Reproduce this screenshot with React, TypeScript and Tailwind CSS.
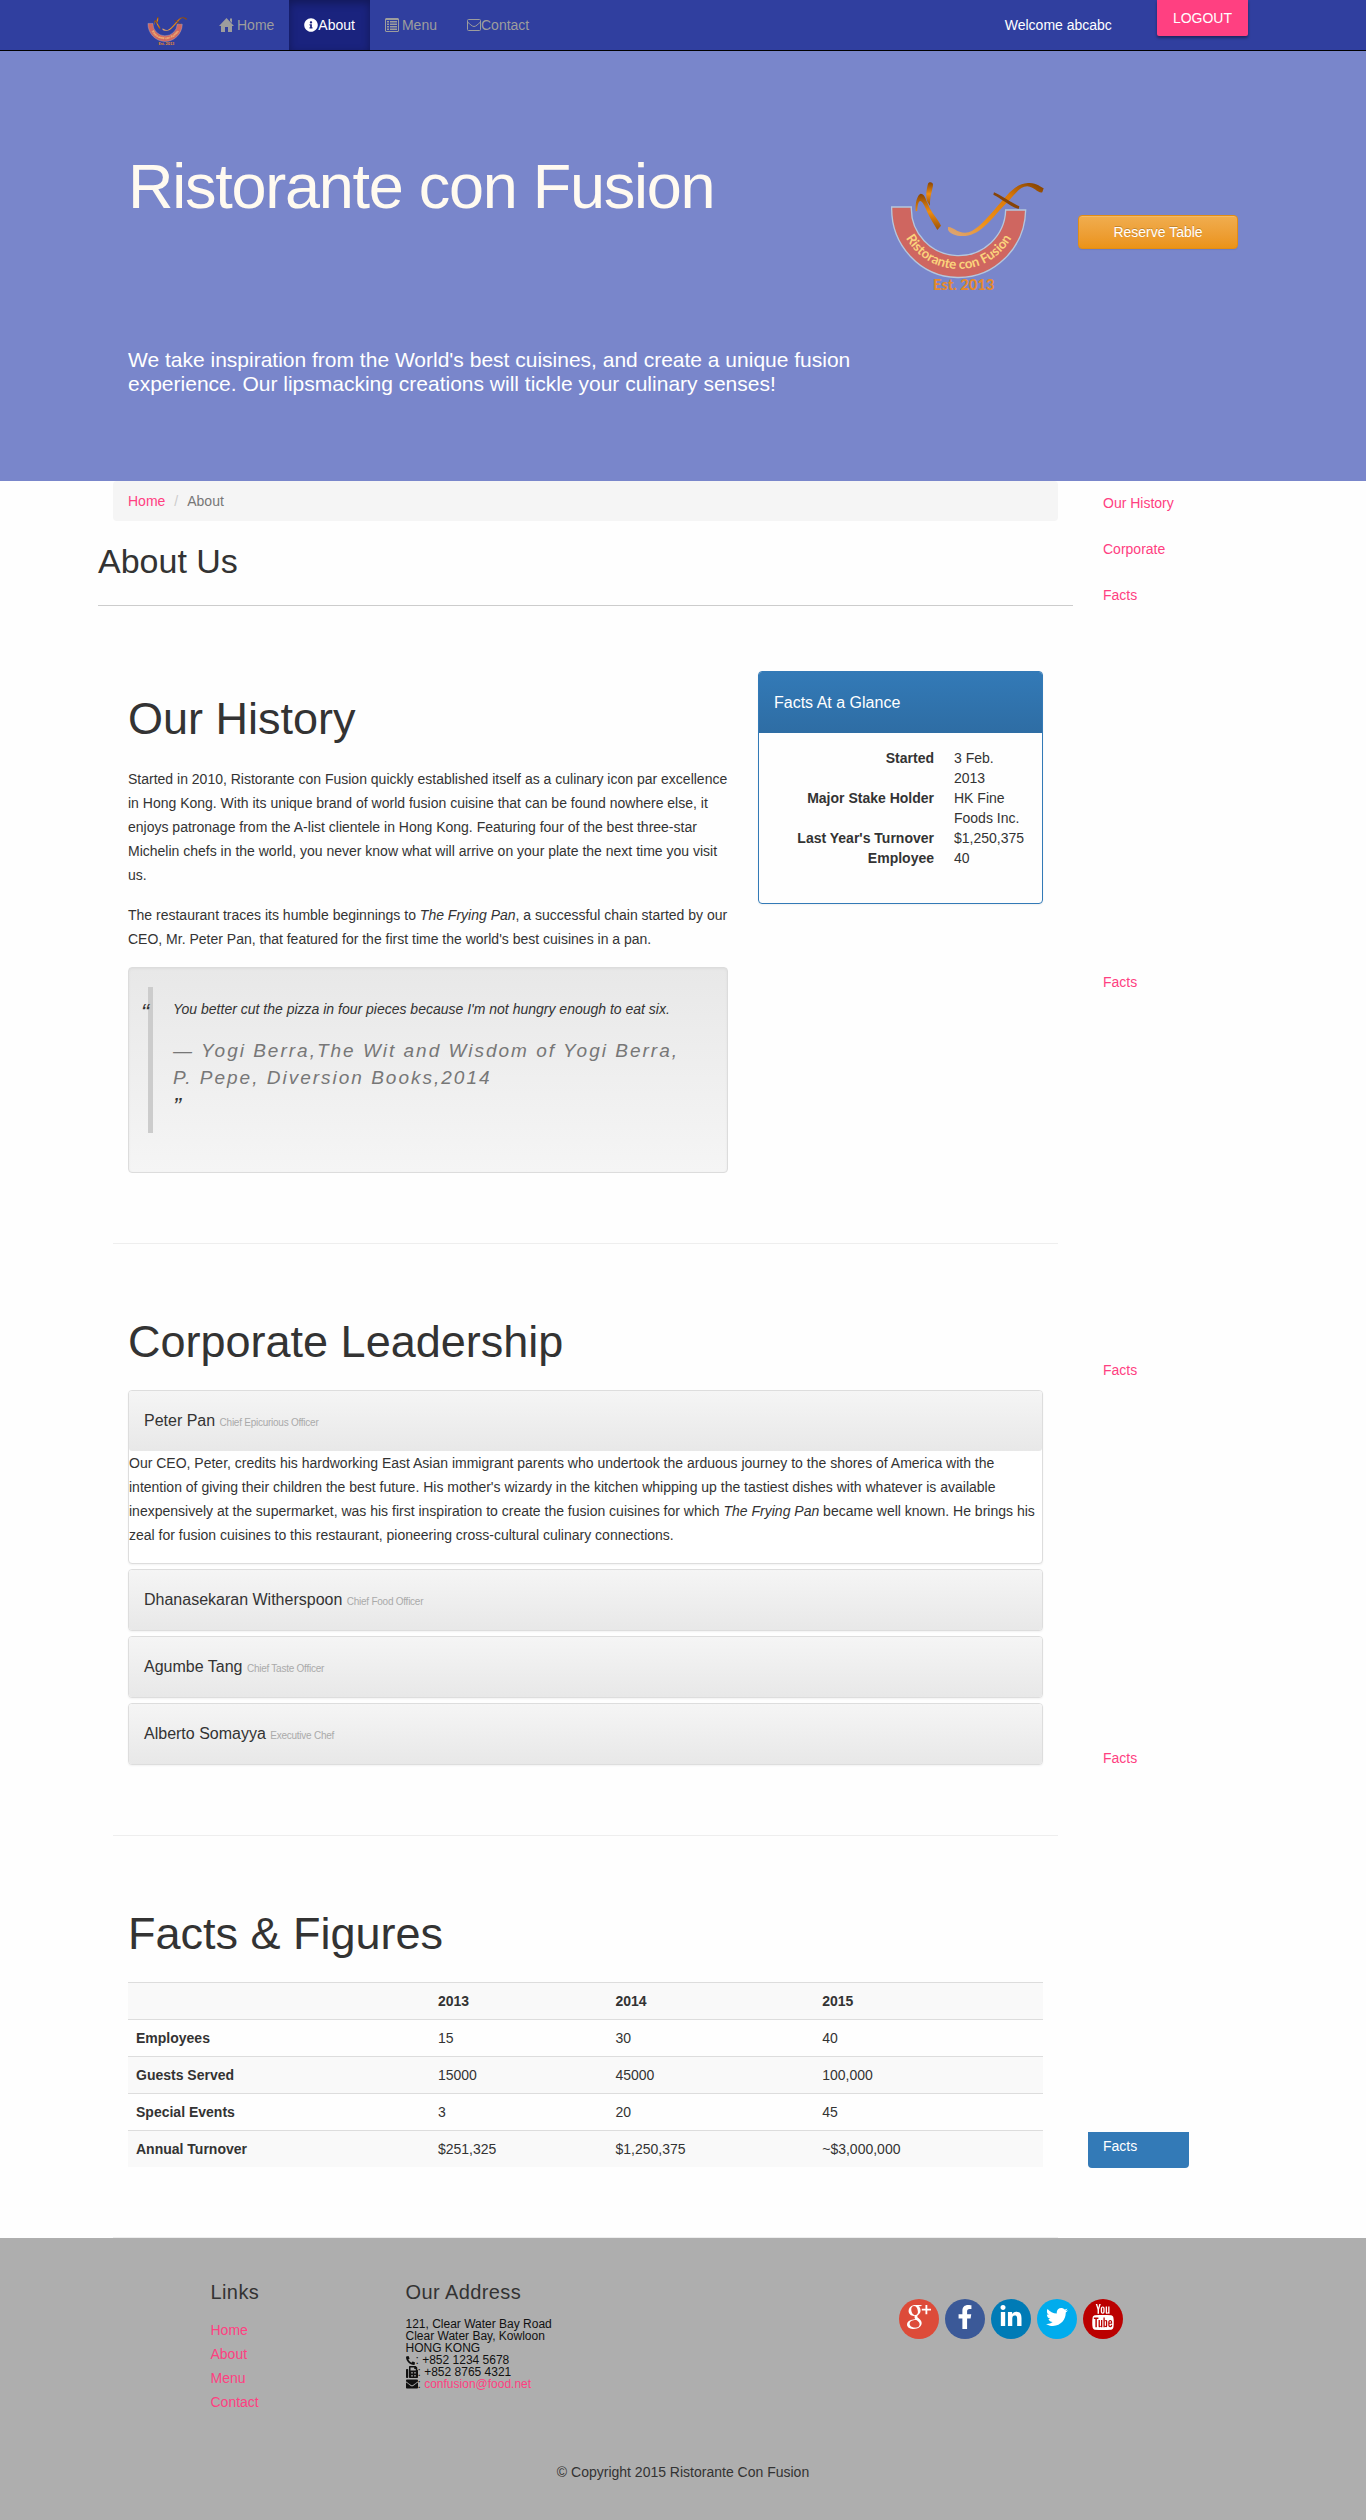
import type { ReactNode } from "react";
import { useId } from "react";
import {
  FaEnvelope,
  FaFacebookF,
  FaFax,
  FaInfoCircle,
  FaLinkedinIn,
  FaPhoneAlt,
  FaTwitter,
} from "react-icons/fa";
import { TfiGoogle, TfiYoutube } from "react-icons/tfi";

function Logo({ className }: { className: string }) {
  const id = useId();
  return (
    <svg viewBox="84 84 480 346" className={className} role="img" aria-label="Ristorante con Fusion logo">
      <defs>
        <path id={id + "arc"} d="M114 172 A182 182 0 0 0 478 172" />
        <linearGradient id={id + "f"} x1="0" y1="1" x2="1" y2="0">
          <stop offset="0" stopColor="#d9a781" />
          <stop offset="0.3" stopColor="#f09117" />
          <stop offset="0.7" stopColor="#d9780a" />
          <stop offset="1" stopColor="#7a3c00" />
        </linearGradient>
        <linearGradient id={id + "r"} x1="0" y1="0" x2="0" y2="1">
          <stop offset="0" stopColor="#8a4500" />
          <stop offset="0.5" stopColor="#ee8c12" />
          <stop offset="1" stopColor="#9a5207" />
        </linearGradient>
      </defs>
      <path
        d="M95 168 A201 207 0 0 0 497 177 L437 177 A141 141 0 0 1 154 168 Z"
        fill="#cf6660"
        stroke="#b4c7dd"
        strokeWidth="4"
      />
      <text
        fontFamily="Lato, 'Liberation Sans', sans-serif"
        fontWeight="700"
        fontSize="40"
        fill="#fbd37c"
        textAnchor="middle"
      >
        <textPath href={"#" + id + "arc"} startOffset="50%">
          Ristorante con Fusion
        </textPath>
      </text>
      <path
        d="M167 181 C165 155 172 132 182 128 C192 128 196 140 204 160 C214 186 234 205 243 224 L232 237 C222 220 212 206 202 184 C194 166 188 150 180 150 C174 152 172 168 172 180 Z"
        fill={"url(#" + id + "r)"}
      />
      <path
        d="M204 98 C208 90 220 94 219 101 C218 116 209 136 210 164 L202 152 C196 134 200 114 204 98 Z"
        fill={"url(#" + id + "r)"}
      />
      <path
        d="M264 228 C280 226 292 250 326 244 C352 236 380 204 412 166 C440 134 464 98 504 96 C530 94 542 108 551 112 L547 124 C534 128 524 108 502 106 C478 106 462 134 436 160 C402 194 364 252 316 255 C290 257 268 248 264 236 Z"
        fill={"url(#" + id + "f)"}
      />
      <path d="M402 124 C424 134 452 154 478 166 L476 174 C446 164 424 142 400 131 Z" fill="#874408" />
      <text
        x="311"
        y="418"
        textAnchor="middle"
        fontFamily="Lato, 'Liberation Sans', sans-serif"
        fontWeight="900"
        fontSize="44"
        fill="#e58a2c"
      >
        Est. 2013
      </text>
    </svg>
  );
}

function HomeIcon() {
  return (
    <svg viewBox="0 0 15 14" className="h-3.5 w-[15px]" fill="currentColor" aria-hidden="true">
      <path d="M7.5 0 15 8H13V14H9V9H6V14H2V8H0Z" />
      <path d="M11 0.500H13V5L11 3Z" />
    </svg>
  );
}

function ListIcon() {
  return (
    <svg viewBox="0 0 14 14" className="size-3.5" fill="currentColor" aria-hidden="true">
      <path d="M1 0H13L14 1V13L13 14H1L0 13V1ZM1 2V13H13V2Z" fillRule="evenodd" />
      <path d="M2 3H4V4.500H2ZM2 5.500H4V7H2ZM2 8H4V9.500H2ZM2 10.500H4V12H2ZM5 3H12V4.500H5ZM5 5.500H12V7H5ZM5 8H12V9.500H5ZM5 10.500H12V12H5Z" />
    </svg>
  );
}

function MailOutlineIcon() {
  return (
    <svg viewBox="0 0 14 12" className="h-3 w-3.5" fill="none" stroke="currentColor" aria-hidden="true">
      <rect x="0.5" y="0.5" width="13" height="11" rx="1" />
      <path d="M0.500 3 C3 5 5 7.500 7 7.500 C9 7.500 11 5 13.500 3" />
    </svg>
  );
}

function NavItem({ active, children }: { active?: boolean; children: ReactNode }) {
  return (
    <li>
      <a
        href="#"
        aria-current={active ? "page" : undefined}
        className={
          active
            ? "flex h-[50px] items-center bg-[#1a237e] px-[15px] text-white shadow-[inset_0_3px_9px_rgba(0,0,0,0.3)]"
            : "flex h-[50px] items-center gap-[3px] px-[15px] text-[#9d9d9d]"
        }
      >
        {children}
      </a>
    </li>
  );
}

const linkClass = "text-[#ff4081]";

function LeaderPanel({ name, role, children }: { name: string; role: string; children?: ReactNode }) {
  return (
    <div className="rounded-[4px] border border-[#ddd] bg-white shadow-[0_1px_2px_rgba(0,0,0,0.05)]">
      <button
        type="button"
        aria-expanded={children ? true : false}
        className="flex h-[60px] w-full items-center rounded-[3px] bg-linear-to-b from-[#f5f5f5] to-[#e8e8e8] px-[15px] text-left text-base text-[#333]"
      >
        <span>
          {name} <small className="text-[10px] tracking-tight text-[#aaa]">{role}</small>
        </span>
      </button>
      {children}
    </div>
  );
}

const leaders = [
  { name: "Dhanasekaran Witherspoon", role: "Chief Food Officer" },
  { name: "Agumbe Tang", role: "Chief Taste Officer" },
  { name: "Alberto Somayya", role: "Executive Chef" },
];

const facts = [
  ["Started", "3 Feb. 2013"],
  ["Major Stake Holder", "HK Fine Foods Inc."],
  ["Last Year's Turnover", "$1,250,375"],
  ["Employee", "40"],
];

const figures = [
  ["Employees", "15", "30", "40"],
  ["Guests Served", "15000", "45000", "100,000"],
  ["Special Events", "3", "20", "45"],
  ["Annual Turnover", "$251,325", "$1,250,375", "~$3,000,000"],
];

function SideLink({ className, children }: { className: string; children: ReactNode }) {
  return (
    <a href="#" className={"block w-[101px] px-[15px] leading-6 " + className}>
      {children}
    </a>
  );
}

export default function App() {
  return (
    <div className="min-h-screen bg-[#fefefe] font-['Liberation_Sans',Arial,sans-serif] text-sm text-[#333]">
      <nav className="border-b border-black bg-[#303f9f]">
        <div className="mx-auto flex h-[50px] max-w-[1170px] justify-between pr-5 pl-[49px]">
          <div className="flex">
            <a href="#" className="mt-4 mr-4">
              <Logo className="h-[30px] w-[41px]" />
            </a>
            <ul className="flex">
              <NavItem>
                <HomeIcon /> Home
              </NavItem>
              <NavItem active>
                <FaInfoCircle className="size-3.5" />
                About
              </NavItem>
              <NavItem>
                <ListIcon /> Menu
              </NavItem>
              <li>
                <a href="#" className="flex h-[50px] items-center px-[15px] text-[#9d9d9d]">
                  <MailOutlineIcon />
                  Contact
                </a>
              </li>
            </ul>
          </div>
          <div className="flex items-start gap-[45px]">
            <span className="leading-[50px] text-white">Welcome abcabc</span>
            <button
              type="button"
              className="h-9 rounded-b-[2px] bg-[#ff4081] px-4 text-white shadow-[0_2px_3px_rgba(0,0,0,0.4)]"
            >
              LOGOUT
            </button>
          </div>
        </div>
      </nav>

      <header className="bg-[#7986cb] pt-26 pb-[85px] text-white">
        <div className="mx-auto grid max-w-[1140px] grid-cols-[8fr_2fr_2fr]">
          <div className="px-[15px]">
            <h1 className="mb-[130px] text-[63px] leading-[63px] tracking-[-0.02em] text-[#fffaf0]">
              Ristorante con Fusion
            </h1>
            <p className="text-[21px] leading-6">
              We take inspiration from the World's best cuisines, and create a unique fusion experience. Our
              lipsmacking creations will tickle your culinary senses!
            </p>
          </div>
          <div className="px-[15px] pt-6">
            <Logo className="w-full" />
          </div>
          <div className="px-[15px] pt-[60px]">
            <button
              type="button"
              className="h-[34px] w-full rounded-[4px] border border-[#e38d13] bg-linear-to-b from-[#f0ad4e] to-[#eb9316] text-white shadow-[inset_0_1px_0_rgba(255,255,255,0.15),0_1px_1px_rgba(0,0,0,0.075)] text-shadow-[0_-1px_0_rgba(0,0,0,0.2)]"
            >
              Reserve Table
            </button>
          </div>
        </div>
      </header>

      <div className="mx-auto grid max-w-[1170px] grid-cols-[10fr_2fr]">
        <main>
          <ol className="mx-[15px] flex rounded-[4px] bg-[#f5f5f5] px-[15px] py-2 leading-6">
            <li>
              <a href="#" className={linkClass}>
                Home
              </a>
            </li>
            <li aria-hidden="true" className="px-[9px] text-[#ccc]">
              /
            </li>
            <li className="text-[#777]">About</li>
          </ol>
          <h2 className="mt-5 border-b border-[#ccc] pb-6 text-[34px] leading-10">About Us</h2>

          <div className="mx-[15px] pt-[15px]">
            <section className="grid grid-cols-[8fr_4fr] border-b border-[#eee] py-[50px]">
              <div className="px-[15px]">
                <h2 className="my-6 text-[45px] leading-12">Our History</h2>
                <p className="mb-4 leading-6">
                  Started in 2010, Ristorante con Fusion quickly established itself as a culinary icon par excellence
                  in Hong Kong. With its unique brand of world fusion cuisine that can be found nowhere else, it
                  enjoys patronage from the A-list clientele in Hong Kong. Featuring four of the best three-star
                  Michelin chefs in the world, you never know what will arrive on your plate the next time you visit
                  us.
                </p>
                <p className="mb-4 leading-6">
                  The restaurant traces its humble beginnings to <em>The Frying Pan</em>, a successful chain started
                  by our CEO, Mr. Peter Pan, that featured for the first time the world's best cuisines in a pan.
                </p>
                <div className="mb-5 rounded-[4px] border border-[#dcdcdc] bg-linear-to-b from-[#e8e8e8] to-[#f5f5f5] px-[19px] pt-[19px] pb-[39px] shadow-[inset_0_1px_3px_rgba(0,0,0,0.05),0_1px_0_rgba(255,255,255,0.1)]">
                  <blockquote className="relative border-l-[5px] border-[#ccc] pt-[10px] pr-5 pb-[10px] pl-5 italic">
                    <span className="absolute top-[14px] -left-3 text-2xl leading-6">“</span>
                    <p className="mb-4 leading-6">
                      You better cut the pizza in four pieces because I'm not hungry enough to eat six.
                    </p>
                    <footer className="text-[19px] leading-[27px] tracking-[2px] text-[#777]">
                      — Yogi Berra,
                      <cite>The Wit and Wisdom of Yogi Berra, P. Pepe, Diversion Books,2014</cite>
                    </footer>
                    <span className="block text-2xl leading-8">”</span>
                  </blockquote>
                </div>
              </div>
              <div className="px-[15px]">
                <div className="overflow-hidden rounded-[4px] border border-[#337ab7] shadow-[0_1px_2px_rgba(0,0,0,0.05)]">
                  <h3 className="bg-linear-to-b from-[#337ab7] to-[#2e6da4] px-[15px] py-[18px] text-base leading-[25px] text-white">
                    Facts At a Glance
                  </h3>
                  <dl className="grid grid-cols-[160px_1fr] gap-x-5 px-[15px] pt-[15px] pb-[35px] leading-5">
                    {facts.map(([term, value]) => (
                      <div key={term} className="contents">
                        <dt className="text-right font-bold">{term}</dt>
                        <dd>{value}</dd>
                      </div>
                    ))}
                  </dl>
                </div>
              </div>
            </section>

            <section className="border-b border-[#eee] px-[15px] py-[50px]">
              <h2 className="my-6 text-[45px] leading-12">Corporate Leadership</h2>
              <div className="mb-5 flex flex-col gap-[5px]">
                <LeaderPanel name="Peter Pan" role="Chief Epicurious Officer">
                  <p className="mb-4 leading-6">
                    Our CEO, Peter, credits his hardworking East Asian immigrant parents who undertook the arduous
                    journey to the shores of America with the intention of giving their children the best future. His
                    mother's wizardy in the kitchen whipping up the tastiest dishes with whatever is available
                    inexpensively at the supermarket, was his first inspiration to create the fusion cuisines for
                    which <em>The Frying Pan</em> became well known. He brings his zeal for fusion cuisines to this
                    restaurant, pioneering cross-cultural culinary connections.
                  </p>
                </LeaderPanel>
                {leaders.map((leader) => (
                  <LeaderPanel key={leader.name} name={leader.name} role={leader.role} />
                ))}
              </div>
            </section>

            <section className="border-b border-[#eee] px-[15px] py-[50px]">
              <h2 className="my-6 text-[45px] leading-12">Facts &amp; Figures</h2>
              <table className="mb-5 w-full table-fixed text-left leading-5">
                <colgroup>
                  <col className="w-[33%]" />
                  <col className="w-[19.4%]" />
                  <col className="w-[22.6%]" />
                  <col className="w-[25%]" />
                </colgroup>
                <thead>
                  <tr className="border-t border-[#ddd] bg-[#f9f9f9]">
                    <td className="p-2" />
                    <th className="p-2">2013</th>
                    <th className="p-2">2014</th>
                    <th className="p-2">2015</th>
                  </tr>
                </thead>
                <tbody>
                  {figures.map(([label, ...values]) => (
                    <tr key={label} className="border-t border-[#ddd] even:bg-[#f9f9f9]">
                      <th className="p-2">{label}</th>
                      {values.map((value) => (
                        <td key={value} className="p-2">
                          {value}
                        </td>
                      ))}
                    </tr>
                  ))}
                </tbody>
              </table>
            </section>
          </div>
        </main>

        <aside className="px-[15px]">
          <SideLink className="mb-0.5 py-[10px] text-[#ff4081]">Our History</SideLink>
          <SideLink className="mb-0.5 py-[10px] text-[#ff4081]">Corporate</SideLink>
          <SideLink className="mb-[343px] py-[10px] text-[#ff4081]">Facts</SideLink>
          <SideLink className="mb-[344px] py-[10px] text-[#ff4081]">Facts</SideLink>
          <SideLink className="mb-[344px] py-[10px] text-[#ff4081]">Facts</SideLink>
          <SideLink className="mb-[352px] py-[10px] text-[#ff4081]">Facts</SideLink>
          <SideLink className="rounded-b-[4px] bg-[#337ab7] pt-0.5 pb-[10px] text-white">Facts</SideLink>
        </aside>
      </div>

      <footer className="bg-[#aeaeae] pt-[42px] pb-9">
        <div className="mx-auto grid max-w-[1170px] grid-cols-12">
          <div className="col-span-2 col-start-2 px-[15px]">
            <h5 className="mb-[14px] text-xl leading-6 tracking-[0.02em]">Links</h5>
            <ul className="leading-6">
              {["Home", "About", "Menu", "Contact"].map((item) => (
                <li key={item}>
                  <a href="#" className={linkClass}>
                    {item}
                  </a>
                </li>
              ))}
            </ul>
          </div>
          <div className="col-span-4 px-[15px]">
            <h5 className="mb-[14px] text-xl leading-6 tracking-[0.02em]">Our Address</h5>
            <address className="text-xs leading-3 text-[#111] not-italic">
              121, Clear Water Bay Road
              <br />
              Clear Water Bay, Kowloon
              <br />
              HONG KONG
              <div className="flex items-center">
                <FaPhoneAlt className="mr-px size-[9px]" />: +852 1234 5678
              </div>
              <div className="flex items-center">
                <FaFax className="size-3" />: +852 8765 4321
              </div>
              <div className="flex items-center">
                <FaEnvelope className="size-3" />
                <span>
                  :{" "}
                  <a href="mailto:confusion@food.net" className={linkClass}>
                    confusion@food.net
                  </a>
                </span>
              </div>
            </address>
          </div>
          <div className="col-span-5 flex items-start gap-1.5 pt-[19px] pl-[118px] text-white">
            <a
              href="#"
              aria-label="Google Plus"
              className="flex size-10 items-center justify-center rounded-full bg-[#dd4b39]"
            >
              <TfiGoogle className="mb-1 size-6" />
            </a>
            <a
              href="#"
              aria-label="Facebook"
              className="flex size-10 items-center justify-center rounded-full bg-[#3b5998]"
            >
              <FaFacebookF className="mb-1 size-6" />
            </a>
            <a
              href="#"
              aria-label="LinkedIn"
              className="flex size-10 items-center justify-center rounded-full bg-[#007bb6]"
            >
              <FaLinkedinIn className="mb-1 size-6" />
            </a>
            <a
              href="#"
              aria-label="Twitter"
              className="flex size-10 items-center justify-center rounded-full bg-[#00aced]"
            >
              <FaTwitter className="mb-1 size-[22px]" />
            </a>
            <a
              href="#"
              aria-label="YouTube"
              className="flex size-10 items-center justify-center rounded-full bg-[#bb0000]"
            >
              <TfiYoutube className="mb-1 size-[26px]" />
            </a>
          </div>
        </div>
        <p className="mt-[46px] text-center leading-6">© Copyright 2015 Ristorante Con Fusion</p>
      </footer>
    </div>
  );
}
